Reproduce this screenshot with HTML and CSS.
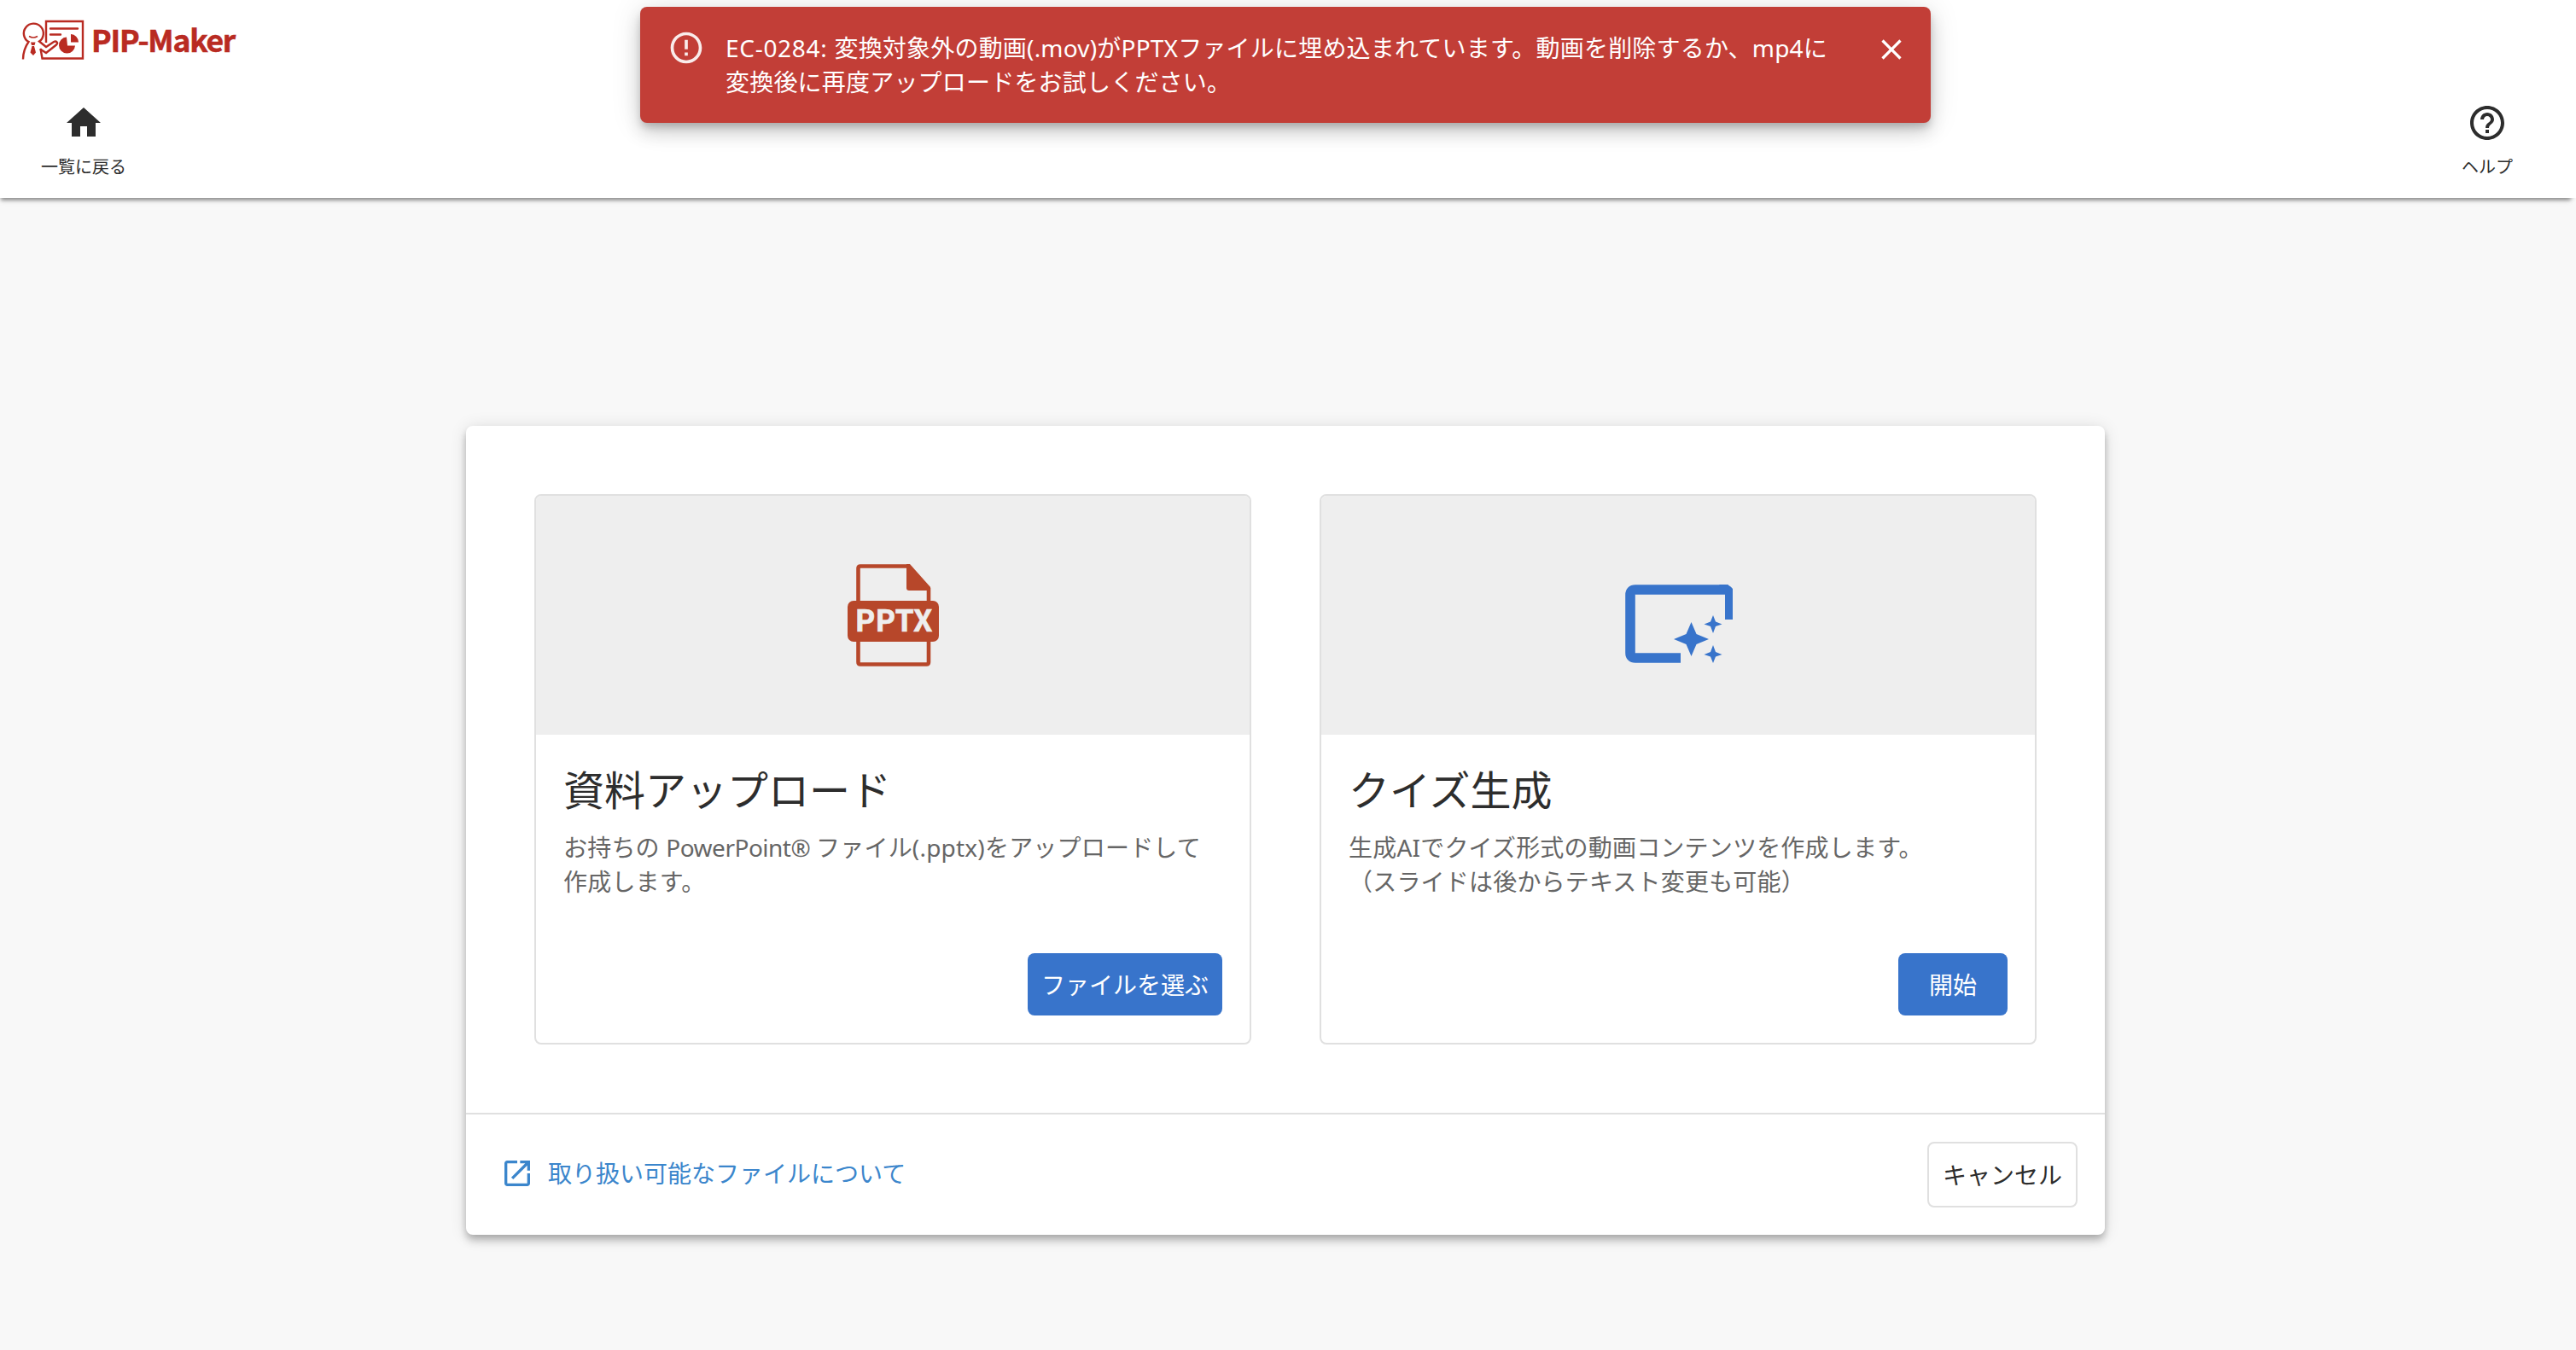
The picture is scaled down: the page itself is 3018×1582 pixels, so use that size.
FILE: index.html
```html
<!DOCTYPE html>
<html lang="ja">
<head>
<meta charset="utf-8">
<title>PIP-Maker</title>
<link rel="stylesheet" href="styles.css">
</head>
<body>
<header class="header">
  <div class="logo">
    <svg class="logo-mark" viewBox="0 0 74 48" fill="none" stroke="currentColor" stroke-width="2.4">
      <path d="M29 27V2H72V45.500H24.500L22.500 34"/>
      <path d="M34 10.500H66M34 17.500H46" stroke-linecap="round"/>
      <path d="M2 46.500C2 40 3 34 8.500 26A11.500 11.500 0 1 1 21 25.500L29 32L38 26C41 24.500 43.500 27 41 29.500L29 39L22 34.500"/>
      <path d="M9 19.500Q14 22.500 19 19.500" stroke-width="1.500"/>
      <path d="M11 26.500H16.500L15.500 30H12ZM12.500 31H15L17 38.500L14 42L10.500 38.500Z" fill="currentColor" stroke="none"/>
      <path d="M53 20.500A9.500 9.500 0 1 0 63 30.500H54ZM58 17V26.500H67A9.500 9.500 0 0 0 58 17Z" fill="currentColor" stroke="none"/>
    </svg>
    <span class="logo-text">PIP-Maker</span>
  </div>
  <nav class="toolbar">
    <a class="tool">
      <svg class="icon-48" viewBox="0 0 24 24"><path d="M10 20v-6h4v6h5v-8h3L12 3 2 12h3v8z"/></svg>
      <span>一覧に戻る</span>
    </a>
    <a class="tool">
      <svg class="icon-48" viewBox="0 0 24 24"><path d="M11 18h2v-2h-2v2zm1-16C6.480 2 2 6.480 2 12s4.480 10 10 10 10-4.480 10-10S17.520 2 12 2zm0 18c-4.410 0-8-3.590-8-8s3.590-8 8-8 8 3.590 8 8-3.590 8-8 8zm0-14c-2.210 0-4 1.790-4 4h2c0-1.100.9-2 2-2s2 .9 2 2c0 2-3 1.750-3 5h2c0-2.250 3-2.500 3-5 0-2.210-1.790-4-4-4z"/></svg>
      <span>ヘルプ</span>
    </a>
  </nav>
</header>

<div class="toast" role="alert">
  <svg class="toast-icon" viewBox="0 0 24 24"><path d="M11 15h2v2h-2zm0-8h2v6h-2zm.99-5C6.470 2 2 6.480 2 12s4.470 10 9.990 10C17.520 22 22 17.520 22 12S17.520 2 11.990 2zM12 20c-4.420 0-8-3.580-8-8s3.580-8 8-8 8 3.580 8 8-3.580 8-8 8z"/></svg>
  <p class="toast-text"><span class="error-code">EC-0284: </span>変換対象外の動画(.mov)がPPTXファイルに埋め込まれています。動画を削除するか、mp4に<br>変換後に再度アップロードをお試しください。</p>
  <svg class="toast-close" viewBox="0 0 24 24"><path d="M19 6.410L17.590 5 12 10.590 6.410 5 5 6.410 10.590 12 5 17.590 6.410 19 12 13.410 17.590 19 19 17.590 13.410 12z"/></svg>
</div>

<main class="main">
  <section class="panel">
    <div class="options">
      <article class="option">
        <div class="option-media">
          <svg class="pptx" viewBox="0 0 108 120">
            <path d="M12.500 44V5Q12.500 2.500 15 2.500H71L95 29V44M12.500 88V115Q12.500 117.500 15 117.500H92.500Q95 117.500 95 115V88" fill="none" stroke="currentColor" stroke-width="4.600"/>
            <path d="M69 0H73L97 27V31H72Q69 31 69 28Z"/>
            <rect x="0" y="43" width="107" height="48" rx="7"/>
            <text x="8.500" y="79" textLength="91" lengthAdjust="spacingAndGlyphs">PPTX</text>
          </svg>
        </div>
        <div class="option-body">
          <h2>資料アップロード</h2>
          <p>お持ちの <span class="product">PowerPoint® </span>ファイル(.pptx)をアップロードして<br>作成します。</p>
          <button class="btn btn-primary">ファイルを選ぶ</button>
        </div>
      </article>
      <article class="option">
        <div class="option-media">
          <svg class="quiz" viewBox="0 0 126 92">
            <path d="M65 86H12Q6 86 6 80V12Q6 6 12 6H121" fill="none" stroke="currentColor" stroke-width="11.600"/>
            <path d="M110 0H117Q122 0 126 5V41H117V10Z"/>
            <path d="M77.500 44L83.500 58L98 64L83.500 70L77.500 84L71.500 70L57 64L71.500 58ZM103 36L106 43.500L113.500 46.500L106 49L103 57L100 49L92.500 46.500L100 43.500ZM103 71L106 79L113.500 82L106 84.500L103 92L100 84.500L92.500 82L100 79Z"/>
          </svg>
        </div>
        <div class="option-body">
          <h2>クイズ生成</h2>
          <p>生成AIでクイズ形式の動画コンテンツを作成します。<br>（スライドは後からテキスト変更も可能）</p>
          <button class="btn btn-primary btn-wide">開始</button>
        </div>
      </article>
    </div>
    <footer class="panel-footer">
      <a class="link">
        <svg class="link-icon" viewBox="0 0 24 24"><path d="M19 19H5V5h7V3H5c-1.110 0-2 .9-2 2v14c0 1.100.89 2 2 2h14c1.100 0 2-.9 2-2v-7h-2v7zM14 3v2h3.590l-9.830 9.830 1.410 1.410L19 6.410V10h2V3h-7z"/></svg>
        <span>取り扱い可能なファイルについて</span>
      </a>
      <button class="btn btn-outline">キャンセル</button>
    </footer>
  </section>
</main>
</body>
</html>
```
FILE: styles.css
```css
* { box-sizing: border-box; }

body {
  margin: 0;
  height: 1582px;
  display: flex;
  flex-direction: column;
  background: #f8f8f8;
  color: #2d2d2d;
  font-family: "Noto Sans", "Noto Sans CJK JP", sans-serif;
  font-size: 28px;
  line-height: 40px;
  overflow: hidden;
}

h2, p { margin: 0; }
svg { display: block; flex: none; fill: currentColor; }

.header {
  width: 3012px;
  height: 232px;
  flex: none;
  background: #fff;
  box-shadow: 6px 0 0 #fff, 0 4px 4px -1px rgba(0,0,0,.25), 2px 2px 4px 0 rgba(0,0,0,.14), 0 2px 8px 0 rgba(0,0,0,.12);
}

.logo {
  display: flex;
  align-items: center;
  gap: 8px;
  padding: 23px 0 0 25px;
  height: 71px;
  color: #b92b22;
}
.logo-mark { width: 74px; height: 48px; fill: none; }
.logo-text {
  font-family: "Noto Sans CJK JP", sans-serif;
  font-weight: 700;
  font-size: 35.5px;
  letter-spacing: -1.2px;
  padding-bottom: 3px;
  -webkit-text-stroke: .6px currentColor;
}

.toolbar {
  display: flex;
  justify-content: space-between;
  padding: 49px 48px 0;
}
.tool {
  display: flex;
  flex-direction: column;
  align-items: center;
  min-width: 100px;
  gap: 8px;
  font-size: 20px;
}
.icon-48 { width: 48px; height: 48px; }

.toast {
  position: absolute;
  top: 8px;
  left: 750px;
  width: 1512px;
  height: 136px;
  padding: 28px 32px;
  display: flex;
  background: #c23e37;
  color: #fff;
  border-radius: 8px;
  box-shadow: 0 6px 10px -2px rgba(0,0,0,.2), 0 12px 20px 0 rgba(0,0,0,.14), 0 2px 36px 0 rgba(0,0,0,.12);
}
.toast-icon { width: 44px; height: 44px; margin: -2px 24px 0 0; opacity: .9; }
.toast-text { flex: 1; white-space: nowrap; letter-spacing: .2px; }
.error-code { letter-spacing: .7px; }
.toast-close { width: 40px; height: 40px; margin-top: 2px; margin-right: -6px; }

.main {
  width: 3012px;
  flex: 1;
  display: flex;
  justify-content: center;
  align-items: flex-start;
  padding-top: 267px;
}
.panel {
  width: 1920px;
  height: 948px;
  background: #fff;
  border-radius: 8px;
  display: flex;
  flex-direction: column;
  box-shadow: 0 4px 8px -2px rgba(0,0,0,.2), 0 8px 10px 0 rgba(0,0,0,.14), 0 2px 20px 0 rgba(0,0,0,.12);
}
.options {
  flex: 1;
  display: grid;
  grid-template-columns: 1fr 1fr;
  gap: 80px;
  padding: 80px;
}
.option {
  border: 2px solid #e0e0e0;
  border-radius: 8px;
  overflow: hidden;
  display: flex;
  flex-direction: column;
}
.option-media {
  height: 280px;
  flex: none;
  display: flex;
  justify-content: center;
  align-items: center;
  background: #eee;
}
.pptx { width: 108px; height: 120px; margin-left: 1px; color: #b7472a; }
.pptx text { fill: #eee; font-family: "Noto Sans CJK JP", sans-serif; font-weight: 700; font-size: 35.5px; stroke: #eee; stroke-width: .6px; }
.quiz { width: 126px; height: 92px; margin: 20px 0 0 2px; color: #3874cb; }

.option-body {
  flex: 1;
  display: flex;
  flex-direction: column;
  padding: 33px 32px 32px;
}
.option-body h2 {
  font-size: 48px;
  line-height: 64px;
  font-weight: 400;
  margin-bottom: 15px;
}
.option-body p { color: #666; white-space: nowrap; letter-spacing: .2px; }
.option-body .product { letter-spacing: -.5px; }

.btn {
  font: inherit;
  border-radius: 8px;
  border: 0;
  padding: 0 16px;
  height: 73px;
  white-space: nowrap;
}
.btn-primary { background: #3874cb; color: #fff; align-self: flex-end; margin-top: auto; }
.option-body .btn-primary { width: 228px; }
.option-body .btn-wide { width: 128px; }
.btn-outline { width: 176px; height: 77px; background: #fff; border: 2px solid #e0e0e0; color: #2d2d2d; }

.panel-footer {
  height: 143px;
  border-top: 2px solid #e0e0e0;
  display: flex;
  align-items: center;
  justify-content: space-between;
  padding: 0 32px 0 40px;
}
.link { display: flex; align-items: center; gap: 16px; padding-bottom: 3px; color: #3b86cc; }
.link-icon { width: 40px; height: 40px; }
```
